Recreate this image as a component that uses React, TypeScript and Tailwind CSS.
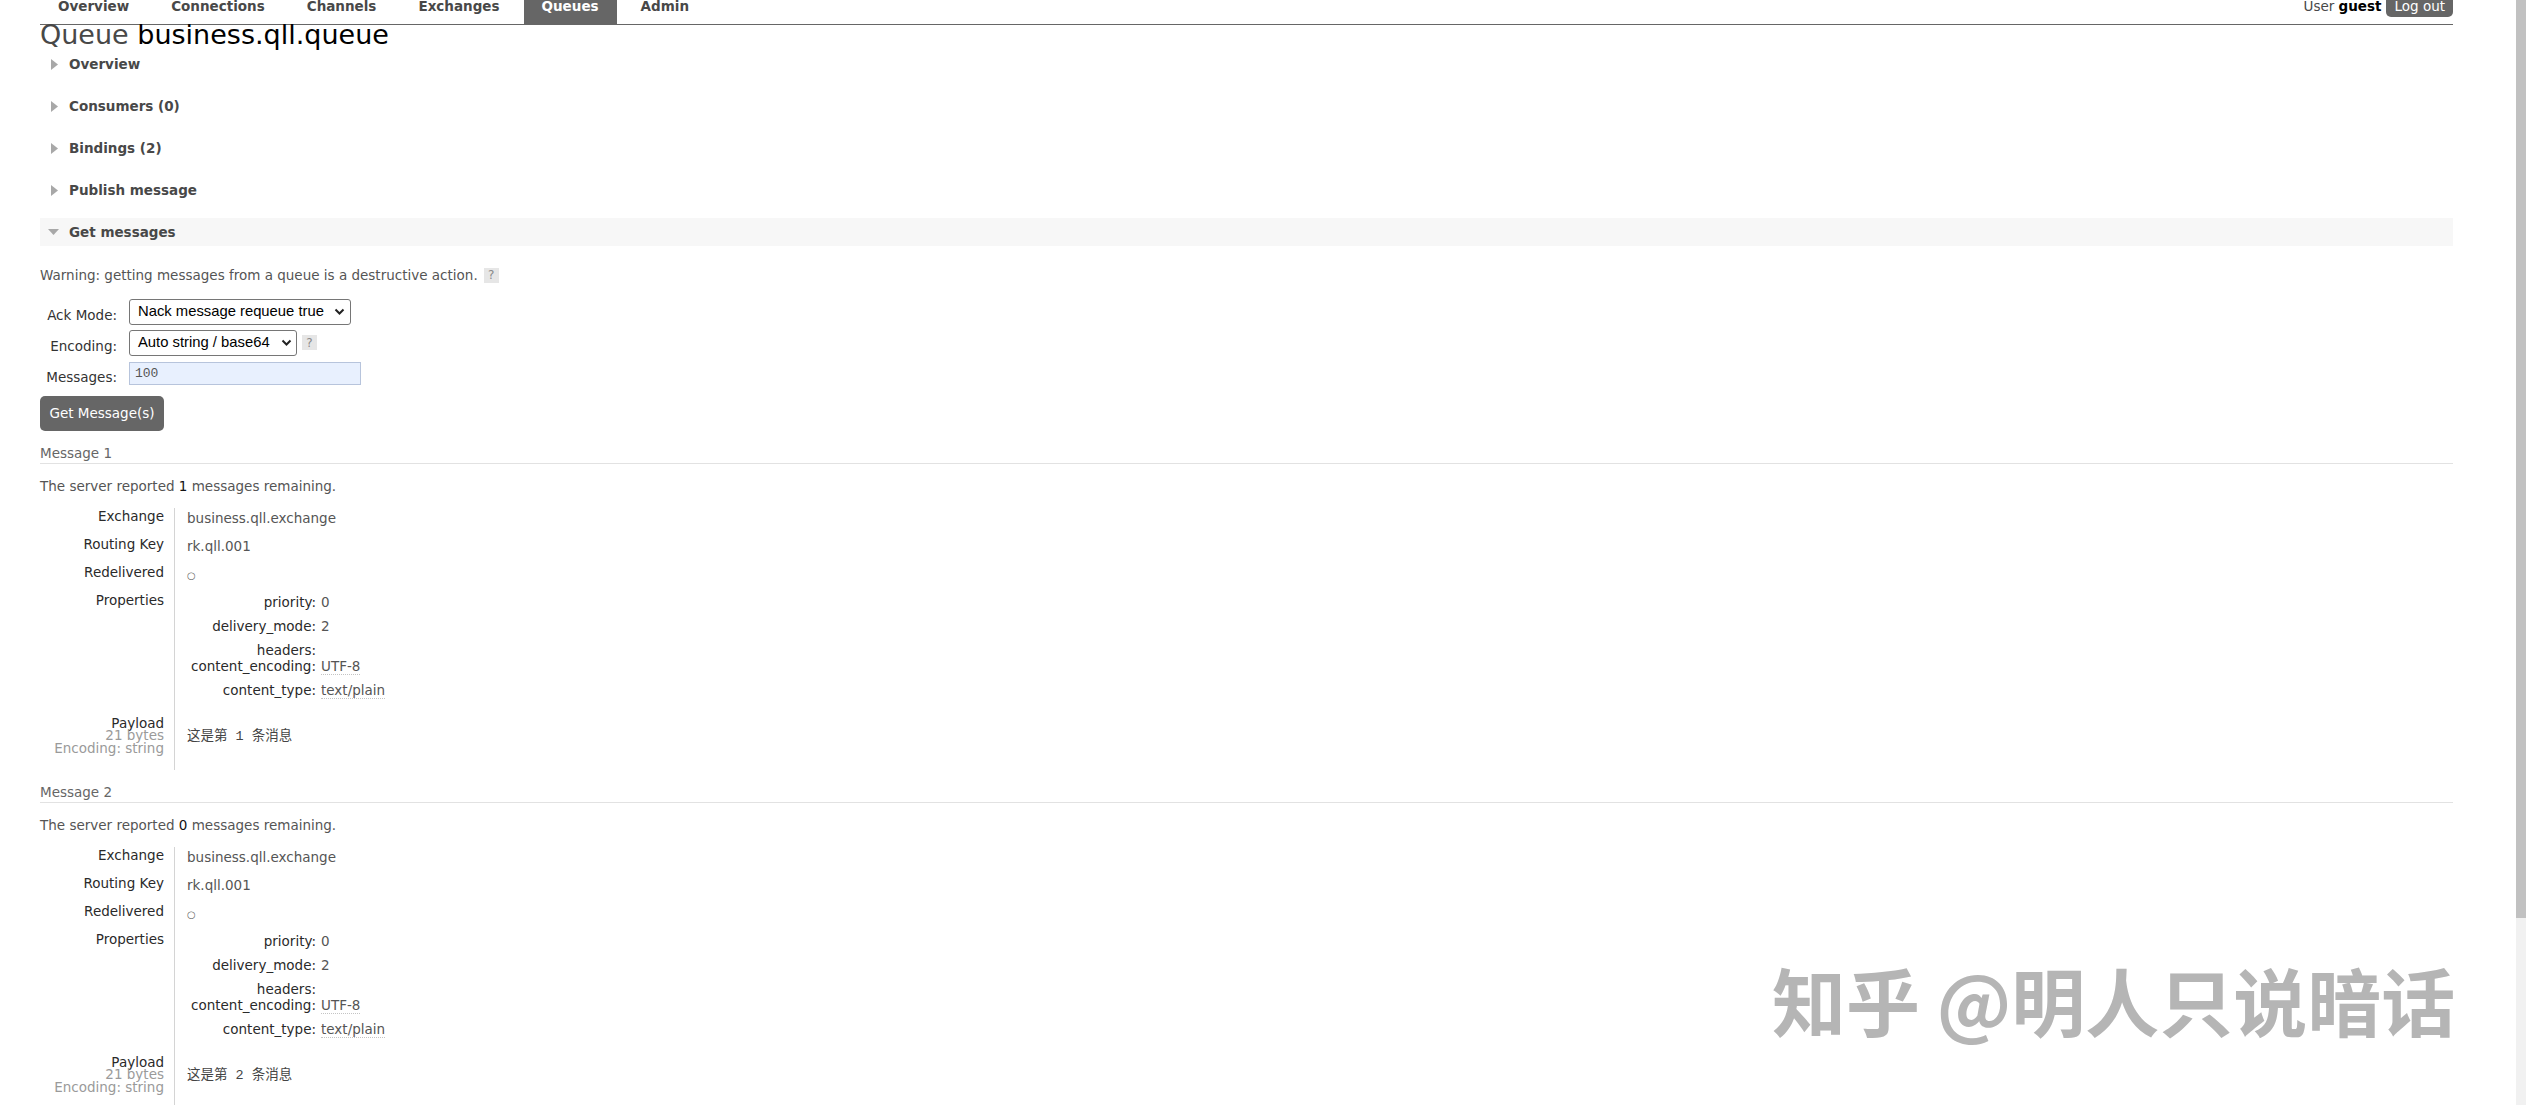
import React from "react";

const navItems = ["Overview", "Connections", "Channels", "Exchanges", "Queues", "Admin"];
const collapsed = ["Overview", "Consumers (0)", "Bindings (2)", "Publish message"];

const messages = [
  { n: 1, remaining: 1, payload: "这是第 1 条消息" },
  { n: 2, remaining: 0, payload: "这是第 2 条消息" },
];

function ArrowRight() {
  return (
    <svg width="7" height="11" viewBox="0 0 7 11" className="shrink-0">
      <path d="M0 0 L7 5.5 L0 11 Z" fill="#a8a8a8" />
    </svg>
  );
}

function ArrowDown() {
  return (
    <svg width="11" height="6" viewBox="0 0 11 6" className="shrink-0">
      <path d="M0 0 L11 0 L5.5 6 Z" fill="#a8a8a8" />
    </svg>
  );
}

function Help() {
  return (
    <span className="inline-flex h-[15px] w-[15px] shrink-0 items-center justify-center bg-[#e6e6e6] text-[12px] leading-none text-[#8a8a8a]">
      ?
    </span>
  );
}

function Chevron() {
  return (
    <svg width="11" height="7" viewBox="0 0 11 7" className="shrink-0">
      <path d="M1.5 1.5 L5.5 5.5 L9.5 1.5" fill="none" stroke="#222" strokeWidth="2" />
    </svg>
  );
}

function FactRow({ label, children, last }: { label: React.ReactNode; children: React.ReactNode; last?: boolean }) {
  return (
    <div className="flex">
      <div className={`w-[135px] shrink-0 border-r border-[#d4d4d4] pr-[10px] text-right leading-[16px] text-[#2a2a2a] ${last ? "pb-[16px] pt-[8.5px]" : "pb-[12px]"}`}>
        {label}
      </div>
      <div className={`pl-[12px] leading-[16px] text-[#555] ${last ? "-mt-[4px] self-center" : "pt-[2px]"}`}>{children}</div>
    </div>
  );
}

function Prop({ k, v, tight, dotted }: { k: string; v?: string; tight?: boolean; dotted?: boolean }) {
  return (
    <div className={`flex leading-[16px] ${tight ? "" : "pb-[8px]"}`}>
      <span className="w-[129px] shrink-0 text-right text-[#2a2a2a]">{k}</span>
      <span className="ml-[5px] text-[#555]">
        {v && <span className={dotted ? "border-b border-dotted border-[#c4c4c4]" : ""}>{v}</span>}
      </span>
    </div>
  );
}

function Message({ n, remaining, payload }: { n: number; remaining: number; payload: string }) {
  return (
    <div className="mt-[14px]">
      <div className="border-b border-[#e2e2e2] pb-[2px] leading-[16px] text-[#666]">Message {n}</div>
      <p className="mt-[14px] leading-[16px] text-[#555]">
        The server reported <span className="text-[#111]">{remaining}</span> messages remaining.
      </p>
      <div className="mt-[14px]">
        <FactRow label="Exchange">business.qll.exchange</FactRow>
        <FactRow label="Routing Key">rk.qll.001</FactRow>
        <FactRow label="Redelivered">
          <span className="text-[10px] text-[#666]">○</span>
        </FactRow>
        <div className="flex">
          <div className="w-[135px] shrink-0 border-r border-[#d4d4d4] pr-[10px] text-right leading-[16px] text-[#2a2a2a]">
            Properties
          </div>
          <div className="pb-[10px] pl-[12px] pt-[2px]">
            <Prop k="priority:" v="0" />
            <Prop k="delivery_mode:" v="2" />
            <Prop k="headers:" tight />
            <Prop k="content_encoding:" v="UTF-8" dotted />
            <Prop k="content_type:" v="text/plain" dotted tight />
          </div>
        </div>
        <FactRow
          last
          label={
            <div className="leading-[12.5px]">
              <div className="text-[#2a2a2a]">Payload</div>
              <div className="text-[#9a9a9a]">21 bytes</div>
              <div className="text-[#9a9a9a]">Encoding: string</div>
            </div>
          }
        >
          <pre className="font-['Liberation_Mono','Noto_Sans_CJK_SC',monospace] text-[13.5px] leading-[16px] text-[#444]">
            {payload}
          </pre>
        </FactRow>
      </div>
    </div>
  );
}

export default function App() {
  return (
    <div className="relative flex h-[1105px] w-full overflow-hidden bg-white font-['DejaVu_Sans',Verdana,sans-serif] text-[13.5px] text-[#484848]">
      <div className="min-w-0 flex-1 pl-[40px] pr-[63px]">
        <div className="flex h-[25px] items-start justify-between border-b border-[#666]">
          <nav className="flex gap-[6px]">
            {navItems.map((item) => (
              <span
                key={item}
                className={`h-[24px] px-[18px] font-bold leading-[13px] ${
                  item === "Queues" ? "bg-[#666] text-white" : "text-[#484848]"
                }`}
              >
                {item}
              </span>
            ))}
          </nav>
          <div className="flex items-start gap-[5px] leading-[13px]">
            <span>
              User <span className="font-bold text-black">guest</span>
            </span>
            <span className="h-[17px] rounded-b-[5px] bg-[#666] px-[8px] text-white">Log out</span>
          </div>
        </div>

        <h1 className="text-[27px] font-normal leading-[20px] text-[#484848]">
          Queue <span className="text-black">business.qll.queue</span>
        </h1>

        <div className="mt-[5px] flex flex-col gap-[14px]">
          {collapsed.map((s) => (
            <div key={s} className="flex h-[28px] items-center">
              <span className="ml-[11px] mr-[11px] flex">
                <ArrowRight />
              </span>
              <span className="font-bold">{s}</span>
            </div>
          ))}
          <div className="flex h-[28px] items-center bg-[#f7f7f7]">
            <span className="ml-[8px] mr-[10px] flex">
              <ArrowDown />
            </span>
            <span className="font-bold">Get messages</span>
          </div>
        </div>

        <p className="mt-[21px] flex items-center gap-[6px] leading-[16px] text-[#555]">
          Warning: getting messages from a queue is a destructive action. <Help />
        </p>

        <div className="mt-[13px] grid grid-cols-[77px_auto] justify-start gap-x-[12px] text-[#333]">
          <span className="mt-[7px] self-center text-right">Ack Mode:</span>
          <div className="flex h-[31px] items-center">
            <div className="flex h-[26px] w-[222px] items-center justify-between rounded-[3px] border border-[#767676] pl-[8px] pr-[5px] font-['Liberation_Sans',Arial,sans-serif] text-[14.8px] text-black">
              <span>Nack message requeue true</span>
              <Chevron />
            </div>
          </div>
          <span className="mt-[7px] self-center text-right">Encoding:</span>
          <div className="flex h-[31px] items-center gap-[5px]">
            <div className="flex h-[26px] w-[168px] items-center justify-between rounded-[3px] border border-[#767676] pl-[8px] pr-[4px] font-['Liberation_Sans',Arial,sans-serif] text-[14.8px] text-black">
              <span>Auto string / base64</span>
              <Chevron />
            </div>
            <Help />
          </div>
          <span className="mt-[7px] self-center text-right">Messages:</span>
          <div className="flex h-[31px] items-center">
            <input
              readOnly
              value="100"
              className="h-[23px] w-[232px] border border-[#b7c4dc] bg-[#e8f0fe] pl-[5px] font-['Liberation_Mono',monospace] text-[13px] text-[#555] outline-none"
            />
          </div>
        </div>

        <button className="mt-[7px] flex h-[35px] w-[124px] items-center justify-center rounded-[5px] bg-[#666] text-white">
          Get Message(s)
        </button>

        {messages.map((m) => (
          <Message key={m.n} n={m.n} remaining={m.remaining} payload={m.payload} />
        ))}
      </div>

      <div className="w-[10px] shrink-0 bg-[#f1f1f1]">
        <div className="h-[918px] bg-[#c1c1c1]" />
      </div>

      <div className="pointer-events-none absolute left-[1772px] top-[962px] whitespace-nowrap font-['Noto_Sans_CJK_SC',sans-serif] text-[74px] font-semibold leading-none text-[#b5b5b5]">
        知乎 @明人只说暗话
      </div>
    </div>
  );
}
